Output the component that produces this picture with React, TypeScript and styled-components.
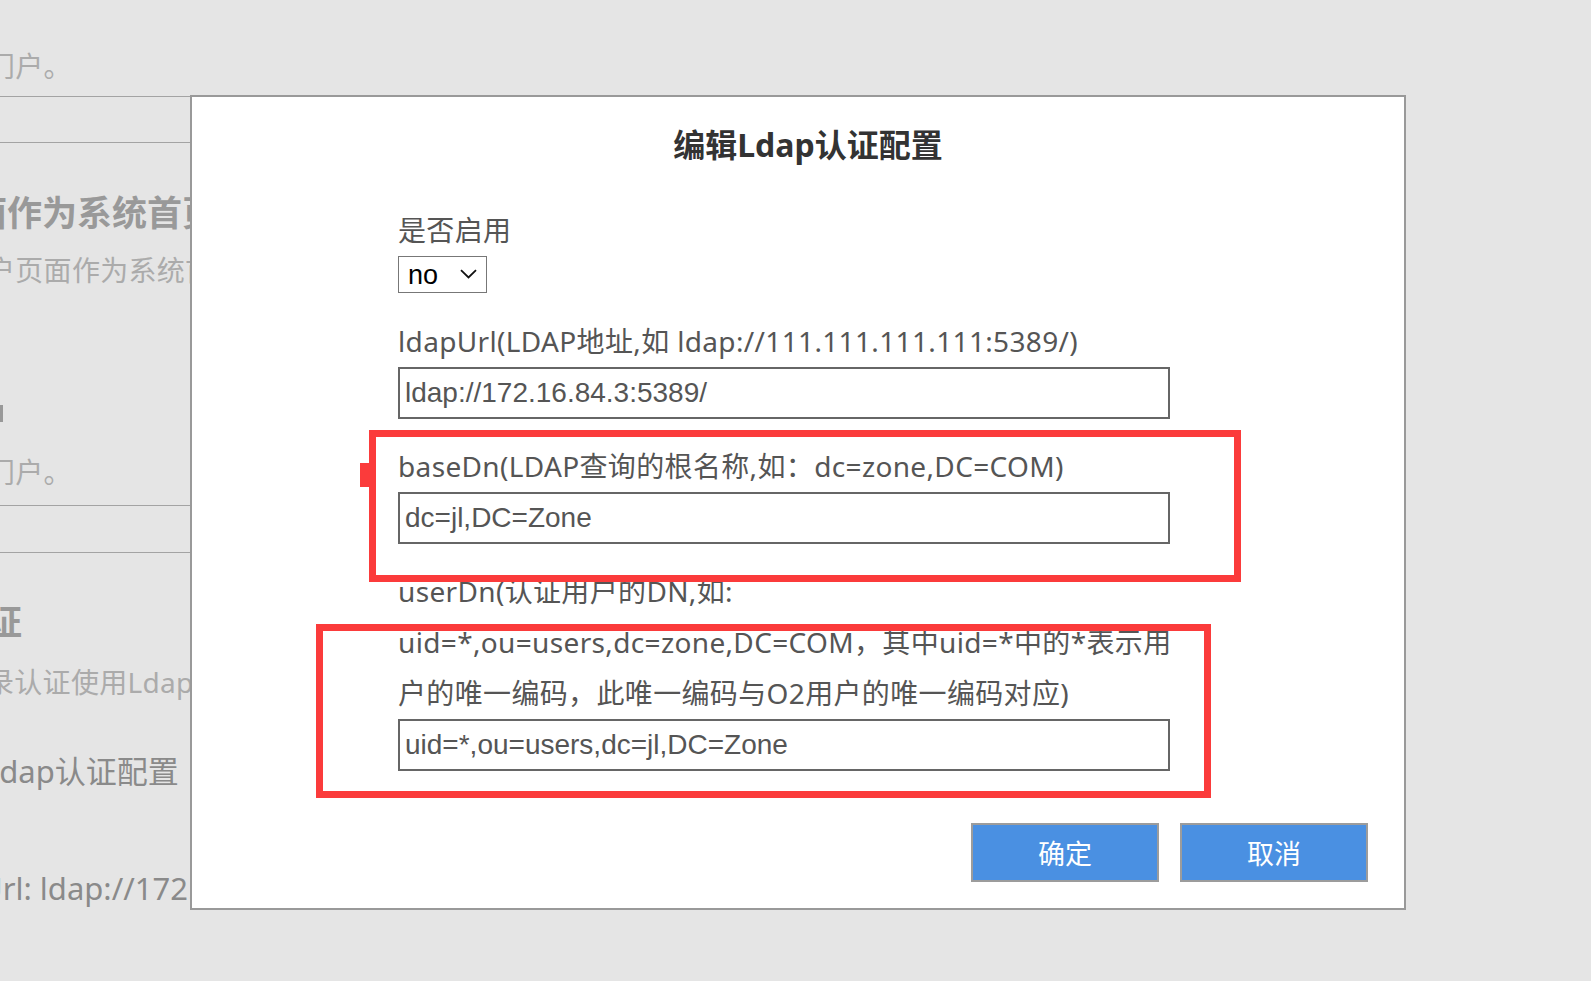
import React from 'react';
import styled, { createGlobalStyle } from 'styled-components';

const GlobalStyle = createGlobalStyle`
  html, body {
    margin: 0;
    padding: 0;
  }
  body {
    background: #e5e5e5;
    font-family: "Noto Sans", "Noto Sans CJK SC", sans-serif;
  }
`;

const Screen = styled.div`
  position: relative;
  width: 1591px;
  height: 981px;
  overflow: hidden;
  background: #e5e5e5;
`;

const Page = styled.div`
  display: flex;
  flex-direction: column;
  width: 1200px;
`;

const BgText = styled.div<{ $mt: number; $shift: number }>`
  margin-top: ${(p) => p.$mt}px;
  margin-left: ${(p) => p.$shift}px;
  font-size: 28px;
  line-height: 40px;
  letter-spacing: 0.3px;
  color: #ababab;
  white-space: nowrap;
`;

const BgHeading = styled.div<{ $mt: number; $shift: number }>`
  margin-top: ${(p) => p.$mt}px;
  margin-left: ${(p) => p.$shift}px;
  font-size: 35px;
  font-weight: 700;
  line-height: 50px;
  color: #999;
  white-space: nowrap;
`;

const BgValue = styled.div<{ $mt: number; $shift: number }>`
  margin-top: ${(p) => p.$mt}px;
  margin-left: ${(p) => p.$shift}px;
  font-size: 31px;
  line-height: 44px;
  color: #8a8a8a;
  white-space: nowrap;
`;

const BgRule = styled.div<{ $mt: number }>`
  margin-top: ${(p) => p.$mt}px;
  height: 1px;
  background: #a3a3a3;
`;

const BgMark = styled.div<{ $mt: number }>`
  margin-top: ${(p) => p.$mt}px;
  width: 3px;
  height: 17px;
  background: #999;
`;

const Dialog = styled.div`
  position: absolute;
  left: 190px;
  top: 95px;
  width: 1216px;
  box-sizing: border-box;
  display: flex;
  flex-direction: column;
  padding-bottom: 26px;
  background: #fff;
  border: 2px solid #999;
`;

const Title = styled.h2`
  margin: 28px 0 0;
  padding-left: 20px;
  text-align: center;
  font-size: 32px;
  font-weight: 700;
  line-height: 40px;
  color: #333;
`;

const Form = styled.div`
  display: flex;
  flex-direction: column;
  margin-top: 40px;
  padding-left: 206px;
`;

const Field = styled.div<{ $gap: number }>`
  display: flex;
  flex-direction: column;
  align-items: flex-start;
  margin-bottom: ${(p) => p.$gap}px;
`;

const Label = styled.label`
  font-size: 28px;
  line-height: 51px;
  letter-spacing: 0.35px;
  color: #555;
  white-space: nowrap;
`;

const TextInput = styled.input`
  width: 772px;
  height: 52px;
  box-sizing: border-box;
  margin: 0;
  padding: 0 5px;
  border: 2px solid #666;
  border-radius: 0;
  outline: none;
  font-family: "Liberation Sans", Arial, sans-serif;
  font-size: 28px;
  color: #555;
  background: #fff;
`;

const SelectBox = styled.div`
  position: relative;
  width: 89px;
  height: 37px;
`;

const Select = styled.select`
  width: 100%;
  height: 100%;
  box-sizing: border-box;
  margin: 0;
  padding: 0 0 0 9px;
  appearance: none;
  border: 1px solid #777;
  border-radius: 0;
  background: #fff;
  font-family: "Liberation Sans", Arial, sans-serif;
  font-size: 27px;
  color: #000;
`;

const Chevron = styled.svg`
  position: absolute;
  right: 10px;
  top: 13px;
  pointer-events: none;
`;

const Actions = styled.div`
  display: flex;
  justify-content: flex-end;
  gap: 21px;
  margin-top: 52px;
  padding-right: 36px;
`;

const Button = styled.button`
  width: 188px;
  height: 59px;
  box-sizing: border-box;
  border: 2px solid #9c9c9c;
  border-radius: 0;
  background: #4a90e2;
  color: #fff;
  font-family: "Noto Sans CJK SC", "Noto Sans", sans-serif;
  font-size: 27px;
  cursor: pointer;
`;

// red annotation frames drawn over the screenshot
const Mark = styled.div<{ $x: number; $y: number; $w: number; $h: number }>`
  position: absolute;
  left: ${(p) => p.$x}px;
  top: ${(p) => p.$y}px;
  width: ${(p) => p.$w}px;
  height: ${(p) => p.$h}px;
  box-sizing: border-box;
  border: 7px solid #fb3b3b;
  pointer-events: none;
`;

const Tab = styled.div<{ $x: number; $y: number }>`
  position: absolute;
  left: ${(p) => p.$x}px;
  top: ${(p) => p.$y}px;
  width: 9px;
  height: 24px;
  background: #fb3b3b;
`;

export default function App() {
  return (
    <>
      <GlobalStyle />
      <Screen>
        <Page>
          <BgText $mt={46} $shift={-13}>门户。</BgText>
          <BgRule $mt={10} />
          <BgRule $mt={45} />
          <BgHeading $mt={45} $shift={-28}>面作为系统首页</BgHeading>
          <BgText $mt={12} $shift={-13}>户页面作为系统首页</BgText>
          <BgMark $mt={115} />
          <BgText $mt={30} $shift={-13}>门户。</BgText>
          <BgRule $mt={13} />
          <BgRule $mt={46} />
          <BgHeading $mt={44} $shift={-13}>证</BgHeading>
          <BgText $mt={15} $shift={-14}>录认证使用Ldap</BgText>
          <BgValue $mt={47} $shift={-17}>Ldap认证配置</BgValue>
          <BgValue $mt={73} $shift={-20}>Url: ldap://172.16.84.3:5389/</BgValue>
        </Page>

        <Dialog>
          <Title>编辑Ldap认证配置</Title>
          <Form>
            <Field $gap={23}>
              <Label>是否启用</Label>
              <SelectBox>
                <Select defaultValue="no">
                  <option value="no">no</option>
                  <option value="yes">yes</option>
                </Select>
                <Chevron width="17" height="10" viewBox="0 0 17 10">
                  <path d="M1 1.2 8.5 8.5 16 1.2" fill="none" stroke="#111" strokeWidth="1.8" />
                </Chevron>
              </SelectBox>
            </Field>
            <Field $gap={22}>
              <Label>ldapUrl(LDAP地址,如 ldap://111.111.111.111:5389/)</Label>
              <TextInput defaultValue="ldap://172.16.84.3:5389/" />
            </Field>
            <Field $gap={22}>
              <Label>baseDn(LDAP查询的根名称,如：dc=zone,DC=COM)</Label>
              <TextInput defaultValue="dc=jl,DC=Zone" />
            </Field>
            <Field $gap={0}>
              <Label>
                userDn(认证用户的DN,如:
                <br />
                uid=*,ou=users,dc=zone,DC=COM，其中uid=*中的*表示用
                <br />
                户的唯一编码，此唯一编码与O2用户的唯一编码对应)
              </Label>
              <TextInput defaultValue="uid=*,ou=users,dc=jl,DC=Zone" />
            </Field>
          </Form>
          <Actions>
            <Button>确定</Button>
            <Button>取消</Button>
          </Actions>

          <Mark $x={177} $y={333} $w={872} $h={152} />
          <Tab $x={168} $y={366} />
          <Mark $x={124} $y={527} $w={895} $h={174} />
        </Dialog>
      </Screen>
    </>
  );
}
